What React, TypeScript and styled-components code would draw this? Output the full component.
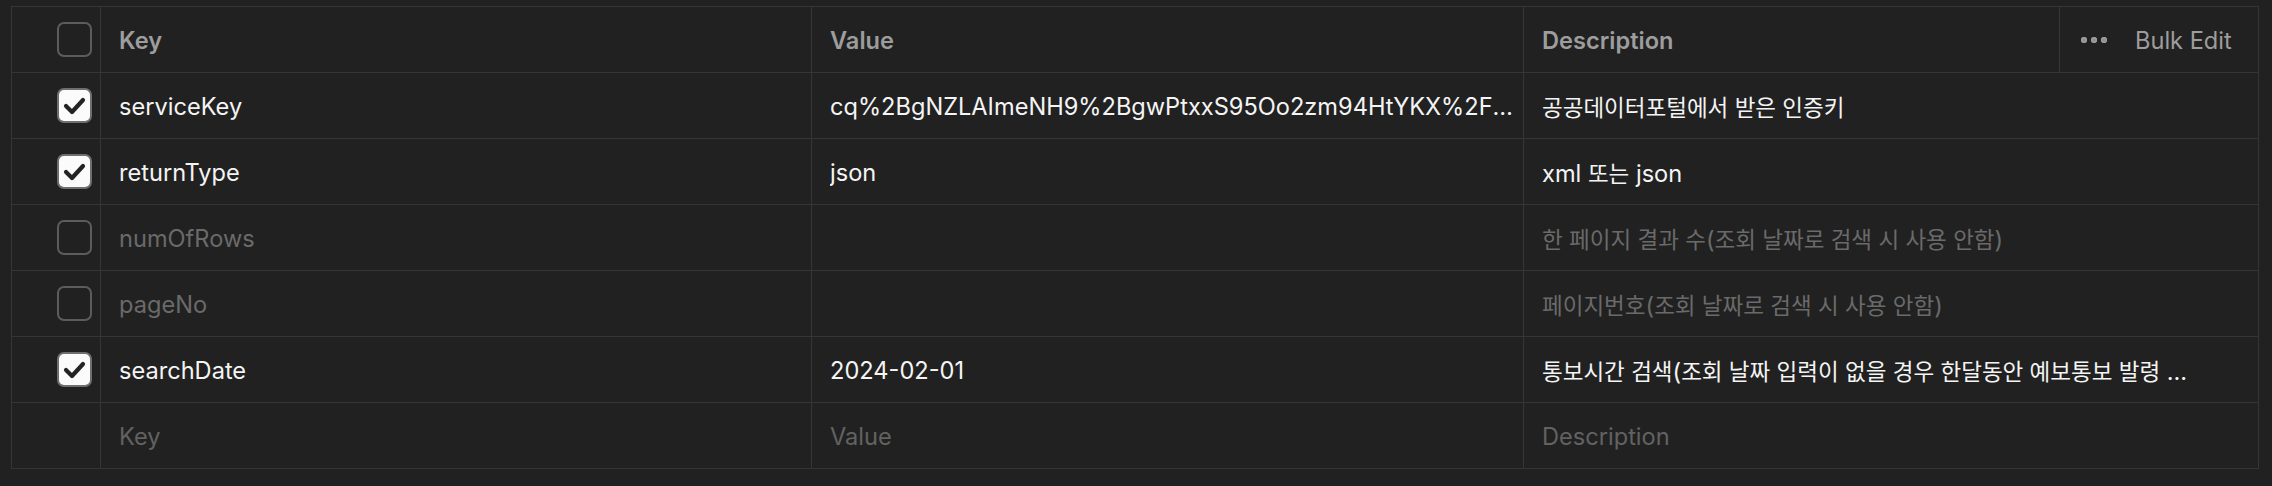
import React from "react";
import styled, { createGlobalStyle, css } from "styled-components";

const GlobalStyle = createGlobalStyle`
  html, body {
    margin: 0;
    padding: 0;
    background: #212121;
  }
  body {
    font-family: Inter, "Noto Sans CJK KR", "Noto Sans", sans-serif;
    -webkit-font-smoothing: antialiased;
  }
`;

const Page = styled.div`
  width: 2272px;
  height: 486px;
  box-sizing: border-box;
  padding: 6px 13px 0 11px;
  background: #212121;
`;

const Table = styled.div`
  display: grid;
  grid-template-columns: 89px 711px 712px 536px 1fr;
  border: 1px solid #353535;
  border-bottom: none;
  background: #212121;
`;

const Row = styled.div`
  display: contents;
`;

type Tone = "header" | "active" | "muted" | "placeholder";

const toneColor: Record<Tone, string> = {
  header: "#9d9d9d",
  active: "#f4f4f4",
  muted: "#6a6a6a",
  placeholder: "#626262",
};

const Cell = styled.div<{ $tone?: Tone; $span?: number; $last?: boolean }>`
  box-sizing: border-box;
  height: 66px;
  display: flex;
  align-items: center;
  padding: 1px 6px 0 18px;
  border-bottom: 1px solid #353535;
  border-right: ${(p) => (p.$last ? "none" : "1px solid #353535")};
  font-size: 23.6px;
  color: ${(p) => toneColor[p.$tone ?? "active"]};
  font-weight: ${(p) => (p.$tone === "header" ? 600 : 400)};
  min-width: 0;
  ${(p) =>
    p.$span &&
    css`
      grid-column: span ${p.$span};
    `}
`;

const CheckCell = styled(Cell)`
  justify-content: flex-end;
  padding: 0 8px 0 0;
`;

const Text = styled.span`
  display: block;
  white-space: nowrap;
  overflow: hidden;
  text-overflow: ellipsis;
  min-width: 0;
`;

const Hangul = styled.span`
  font-size: 22.5px;
`;

const Box = styled.div<{ $checked: boolean }>`
  width: 35px;
  height: 35px;
  box-sizing: border-box;
  border-radius: 7px;
  border: 2px solid ${(p) => (p.$checked ? "#6f6f6f" : "#5c5c5c")};
  background: ${(p) => (p.$checked ? "#fbfbfb" : "transparent")};
  display: flex;
  align-items: center;
  justify-content: center;
`;

const BulkCell = styled(Cell)`
  padding: 1px 0 0 21px;
  gap: 28px;
  justify-content: flex-start;
  font-weight: 400;
  white-space: nowrap;
`;

const Dots = styled.div`
  display: flex;
  gap: 4px;
  align-items: center;
  flex: none;
`;

const Dot = styled.span`
  width: 6px;
  height: 6px;
  border-radius: 50%;
  background: #8f8f8f;
  box-shadow: inset 0 0 0 1.5px #9d9d9d;
`;

const CheckBox = ({ checked }: { checked: boolean }) => (
  <Box $checked={checked}>
    {checked && (
      <svg width="25" height="25" viewBox="0 0 25 25">
        <polyline
          points="4,13 10,19 21,7"
          fill="none"
          stroke="#232323"
          strokeWidth="4.2"
          strokeLinecap="round"
          strokeLinejoin="round"
        />
      </svg>
    )}
  </Box>
);

const Mixed = ({ text }: { text: string }) => {
  const parts = text.split(/([\uAC00-\uD7A3][\uAC00-\uD7A3 ]*[\uAC00-\uD7A3]|[\uAC00-\uD7A3])/);
  return (
    <>
      {parts.map((part, i) =>
        /[\uAC00-\uD7A3]/.test(part) ? (
          <Hangul key={i}>{part}</Hangul>
        ) : (
          <React.Fragment key={i}>{part}</React.Fragment>
        )
      )}
    </>
  );
};

type Param = {
  enabled: boolean;
  key: string;
  value: string;
  description: string;
};

const params: Param[] = [
  {
    enabled: true,
    key: "serviceKey",
    value:
      "cq%2BgNZLAImeNH9%2BgwPtxxS95Oo2zm94HtYKX%2FxR7bQk1vWdL%2Fz8sJpYt0aE3mUcNn%3D%3D",
    description: "공공데이터포털에서 받은 인증키",
  },
  { enabled: true, key: "returnType", value: "json", description: "xml 또는 json" },
  {
    enabled: false,
    key: "numOfRows",
    value: "",
    description: "한 페이지 결과 수(조회 날짜로 검색 시 사용 안함)",
  },
  {
    enabled: false,
    key: "pageNo",
    value: "",
    description: "페이지번호(조회 날짜로 검색 시 사용 안함)",
  },
  {
    enabled: true,
    key: "searchDate",
    value: "2024-02-01",
    description: "통보시간 검색(조회 날짜 입력이 없을 경우 한달동안 예보통보 발령 ...",
  },
];

export default function App() {
  return (
    <>
      <GlobalStyle />
      <Page>
        <Table>
          <Row>
            <CheckCell $tone="header">
              <CheckBox checked={false} />
            </CheckCell>
            <Cell $tone="header">Key</Cell>
            <Cell $tone="header">Value</Cell>
            <Cell $tone="header">Description</Cell>
            <BulkCell $tone="header" $last>
              <Dots>
                <Dot />
                <Dot />
                <Dot />
              </Dots>
              <span>Bulk Edit</span>
            </BulkCell>
          </Row>
          {params.map((p) => {
            const tone: Tone = p.enabled ? "active" : "muted";
            return (
              <Row key={p.key}>
                <CheckCell>
                  <CheckBox checked={p.enabled} />
                </CheckCell>
                <Cell $tone={tone}>
                  <Text>{p.key}</Text>
                </Cell>
                <Cell $tone={tone}>
                  <Text>{p.value}</Text>
                </Cell>
                <Cell $tone={tone} $span={2} $last>
                  <Text>
                    <Mixed text={p.description} />
                  </Text>
                </Cell>
              </Row>
            );
          })}
          <Row>
            <CheckCell />
            <Cell $tone="placeholder">Key</Cell>
            <Cell $tone="placeholder">Value</Cell>
            <Cell $tone="placeholder" $span={2} $last>
              Description
            </Cell>
          </Row>
        </Table>
      </Page>
    </>
  );
}
